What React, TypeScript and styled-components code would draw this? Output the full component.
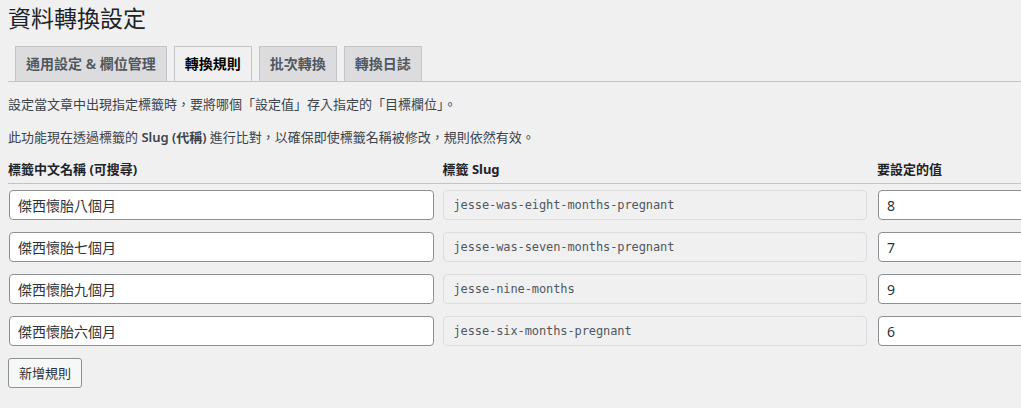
import { Fragment } from 'react'
import styled, { createGlobalStyle } from 'styled-components'

const GlobalStyle = createGlobalStyle`
  html, body {
    margin: 0;
    padding: 0;
    background: #f0f0f1;
    overflow: hidden;
  }
  body {
    font-family: "Noto Sans", "Noto Sans CJK TC", sans-serif;
    font-size: 13px;
    color: #1d2327;
  }
`

const Wrap = styled.div`
  padding: 0 0 0 8px;
  width: 1400px;
`

const Title = styled.h1`
  margin: 0;
  padding: 3px 0 0;
  font-size: 23px;
  font-weight: 400;
  line-height: 30px;
  color: #1d2327;
`

const TabBar = styled.nav`
  display: flex;
  margin-top: 13px;
  border-bottom: 1px solid #c3c4c7;
`

const Tab = styled.a<{ $active?: boolean }>`
  display: block;
  margin-left: 7px;
  padding: 5px 10px;
  font-size: 14px;
  font-weight: 600;
  line-height: 24px;
  border: 1px solid #c3c4c7;
  border-bottom: none;
  background: ${(p) => (p.$active ? '#f0f0f1' : '#dcdcde')};
  color: ${(p) => (p.$active ? '#000' : '#50575e')};
  text-decoration: none;
  white-space: nowrap;
`

const Text = styled.p`
  margin: 13px 0;
  font-size: 13px;
  line-height: 19.5px;
  color: #3c434a;

  b {
    font-weight: 600;
  }
`

const Table = styled.div`
  display: grid;
  grid-template-columns: repeat(3, 434.5px);
`

const Head = styled.div`
  padding: 0 0 4px;
  font-size: 13px;
  font-weight: 700;
  line-height: 19px;
  color: #1d2327;
  border-bottom: 1px solid #c3c4c7;
`

const Cell = styled.div`
  padding: 6px 10px 6px 0;
`

const Field = styled.input`
  box-sizing: border-box;
  display: block;
  width: 100%;
  height: 30px;
  margin: 0 0 0 1px;
  padding: 0 8px;
  border: 1px solid #8c8f94;
  border-radius: 4px;
  background: #fff;
  font-family: "Noto Sans", "Noto Sans CJK TC", sans-serif;
  font-size: 14px;
  color: #2c3338;
  outline: none;
`

const Slug = styled.div`
  box-sizing: border-box;
  height: 30px;
  padding: 0 10px;
  border: 1px solid #dcdcde;
  border-radius: 4px;
  background: #f0f0f1;
  font-family: "DejaVu Sans Mono", "Liberation Mono", monospace;
  font-size: 12px;
  letter-spacing: -0.1px;
  line-height: 28px;
  color: #50575e;
  white-space: nowrap;
`

const AddButton = styled.button`
  margin-top: 6px;
  height: 30px;
  padding: 0 10px;
  border: 1px solid #8c8f94;
  border-radius: 3px;
  background: #f6f7f7;
  font-family: "Noto Sans", "Noto Sans CJK TC", sans-serif;
  font-size: 13px;
  line-height: 28px;
  color: #2c3338;
  cursor: pointer;
`

const rules = [
  { name: '傑西懷胎八個月', slug: 'jesse-was-eight-months-pregnant', value: '8' },
  { name: '傑西懷胎七個月', slug: 'jesse-was-seven-months-pregnant', value: '7' },
  { name: '傑西懷胎九個月', slug: 'jesse-nine-months', value: '9' },
  { name: '傑西懷胎六個月', slug: 'jesse-six-months-pregnant', value: '6' },
]

function App() {
  return (
    <>
      <GlobalStyle />
      <Wrap>
        <Title>資料轉換設定</Title>
        <TabBar>
          <Tab href="#">通用設定 &amp; 欄位管理</Tab>
          <Tab href="#" $active>轉換規則</Tab>
          <Tab href="#">批次轉換</Tab>
          <Tab href="#">轉換日誌</Tab>
        </TabBar>
        <Text>設定當文章中出現指定標籤時，要將哪個「設定值」存入指定的「目標欄位」。</Text>
        <Text>
          此功能現在透過標籤的 <b>Slug (代稱)</b> 進行比對，以確保即使標籤名稱被修改，規則依然有效。
        </Text>
        <Table>
          <Head>標籤中文名稱 (可搜尋)</Head>
          <Head>標籤 Slug</Head>
          <Head>要設定的值</Head>
          {rules.map((r) => (
            <Fragment key={r.slug}>
              <Cell>
                <Field defaultValue={r.name} />
              </Cell>
              <Cell>
                <Slug>{r.slug}</Slug>
              </Cell>
              <Cell>
                <Field defaultValue={r.value} />
              </Cell>
            </Fragment>
          ))}
        </Table>
        <AddButton>新增規則</AddButton>
      </Wrap>
    </>
  )
}

export default App
